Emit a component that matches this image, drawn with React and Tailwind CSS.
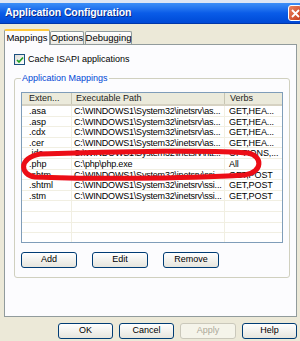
import React from "react";

const PATH = "C:\\WINDOWS1\\System32\\inetsrv\\";

const rows = [
  [".asa", PATH + "as...", "GET,HEA..."],
  [".asp", PATH + "as...", "GET,HEA..."],
  [".cdx", PATH + "as...", "GET,HEA..."],
  [".cer", PATH + "as...", "GET,HEA..."],
  [".idc", PATH + "htt...", "OPTIONS,..."],
  [".php", "C:\\php\\php.exe", "All"],
  [".shtm", PATH + "ssi...", "GET,POST"],
  [".shtml", PATH + "ssi...", "GET,POST"],
  [".stm", PATH + "ssi...", "GET,POST"],
];

function XpButton({ children, disabled, className = "" }) {
  return (
    <div
      className={
        "h-[16px] flex items-center justify-center rounded-[3px] border text-[9px] " +
        (disabled
          ? "border-[#cac8bb] bg-[#f5f4ea] text-[#aca899] "
          : "border-[#003c74] bg-gradient-to-b from-[#ffffff] to-[#e6e5dd] text-black ") +
        className
      }
    >
      {children}
    </div>
  );
}

export default function App() {
  return (
    <div
      className="relative w-[300px] h-[341px] overflow-hidden bg-[#ece9d8]"
      style={{ fontFamily: '"Liberation Sans", Arial, sans-serif' }}
    >
      {/* window behind */}
      <div className="h-[3px] bg-[#dfe7f4]" />
      {/* title bar */}
      <div className="h-[21px] flex items-center justify-between bg-gradient-to-b from-[#3d8ff7] via-[#0a5ce8] to-[#0049d6] border-b border-[#0036a8]">
        <span className="pl-[5px] text-white font-bold text-[10.5px] tracking-[-0.1px] [text-shadow:1px_1px_0_#0a2a8a]">
          Application Configuration
        </span>
        <div className="w-[14px] h-[16px] -mr-[2px] rounded-[3px] border border-white bg-gradient-to-br from-[#e9825f] to-[#c63a14] flex items-center justify-center">
          <svg width="9" height="9" viewBox="0 0 9 9">
            <path d="M1 1 L8 8 M8 1 L1 8" stroke="white" strokeWidth="1.8" />
          </svg>
        </div>
      </div>

      <div className="flex h-[317px]">
        <div className="w-[3px] bg-[#0a4fd6]" />
        <div className="flex-1 pl-[4px] pr-[3px] pt-[5px] flex flex-col">
          {/* tabs */}
          <div className="flex items-end h-[15px] text-[9.5px] text-black">
            <div className="relative z-10 h-[16px] w-[46px] -mb-[1px] bg-[#fcfcfe] border border-b-0 border-[#919b9c] border-t-[#ffc83c] border-t-2 rounded-t-[2px] flex items-center justify-center">
              Mappings
            </div>
            <div className="h-[13px] w-[34px] bg-gradient-to-b from-[#ffffff] to-[#ecebe5] border border-b-0 border-[#919b9c] rounded-t-[2px] flex items-center justify-center">
              Options
            </div>
            <div className="h-[13px] w-[47px] ml-[1px] bg-gradient-to-b from-[#ffffff] to-[#ecebe5] border border-b-0 border-[#919b9c] rounded-t-[2px] flex items-center justify-center">
              Debugging
            </div>
          </div>

          {/* panel */}
          <div className="h-[273px] bg-[#fcfcfe] border border-[#919b9c] pl-[9px] pr-[6px] pt-[9px]">
            <div className="flex items-center gap-[3px] h-[11px] text-[9px] text-black">
              <div className="w-[11px] h-[11px] border border-[#1c5180] bg-gradient-to-br from-[#dcdcd7] to-[#ffffff] flex items-center justify-center">
                <svg width="8" height="8" viewBox="0 0 8 8">
                  <path d="M1 4 L3 6 L7 1.5" stroke="#21a121" strokeWidth="1.7" fill="none" />
                </svg>
              </div>
              <span>Cache ISAPI applications</span>
            </div>

            {/* group box */}
            <div className="relative mt-[13px] h-[200px] border border-[#d0d0bf] rounded-[3px] px-[6px] pt-[13px]">
              <span className="absolute -top-[6px] left-[6px] px-[1px] bg-[#fcfcfe] text-[9px] leading-[11px] text-[#0046d5]">
                Application Mappings
              </span>

              {/* list view */}
              <div className="h-[151px] border border-[#7f9db9] bg-white overflow-hidden text-[9px] text-black">
                <div className="flex h-[13px] bg-[#ebeadb] border-b-2 border-[#d6d2c2] text-[#222]">
                  <div className="w-[50px] pl-[7px] flex items-center border-r border-[#c7c5b2]">Exten...</div>
                  <div className="w-[153px] pl-[4px] flex items-center border-r border-[#c7c5b2]">Executable Path</div>
                  <div className="flex-1 pl-[5px] flex items-center">Verbs</div>
                </div>
                {rows.map((r) => (
                  <div key={r[0]} className="flex h-[10.6px] leading-[10.6px] border-b border-[#f1efe2]">
                    <div className="w-[50px] pl-[7px] border-r border-[#f1efe2] whitespace-nowrap">{r[0]}</div>
                    <div className="w-[153px] pl-[2px] border-r border-[#f1efe2] whitespace-nowrap tracking-[-0.2px]">{r[1]}</div>
                    <div className="flex-1 pl-[4px] whitespace-nowrap tracking-[-0.1px]">{r[2]}</div>
                  </div>
                ))}
                {[0, 1, 2, 3].map((i) => (
                  <div key={i} className="flex h-[10.6px] border-b border-[#f1efe2]">
                    <div className="w-[50px] border-r border-[#f1efe2]" />
                    <div className="w-[153px] border-r border-[#f1efe2]" />
                    <div className="flex-1" />
                  </div>
                ))}
              </div>

              <div className="flex mt-[9px] gap-[15px]">
                <XpButton className="w-[56px]">Add</XpButton>
                <XpButton className="w-[56px]">Edit</XpButton>
                <XpButton className="w-[56px]">Remove</XpButton>
              </div>
            </div>
          </div>

          {/* dialog buttons */}
          <div className="flex mt-[6px] pl-[54px] gap-[6px]">
            <XpButton className="w-[55px]">OK</XpButton>
            <XpButton className="w-[55px]">Cancel</XpButton>
            <XpButton className="w-[56px]" disabled>Apply</XpButton>
            <XpButton className="w-[55px]">Help</XpButton>
          </div>
        </div>
      </div>

      {/* red marker ellipse */}
      <svg className="absolute left-0 top-0 pointer-events-none" width="300" height="341">
        <defs>
          <filter id="soft">
            <feGaussianBlur stdDeviation="0.6" />
          </filter>
        </defs>
        <path
          d="M40 154 C120 151 220 150 248 153 C263 156 263 172 245 175 C180 179 80 179 35 177 C20 175 18 158 40 154 Z"
          fill="none"
          stroke="#ec0a12"
          strokeWidth="5"
          filter="url(#soft)"
        />
      </svg>
    </div>
  );
}
